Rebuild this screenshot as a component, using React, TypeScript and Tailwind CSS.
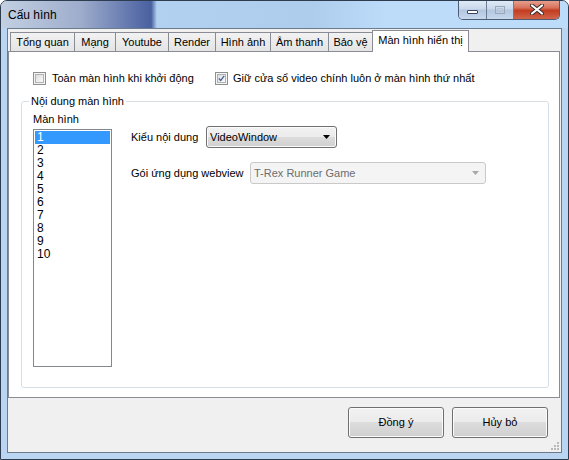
import React from "react";

const tabs = [
  { label: "Tổng quan", w: "w-[65px]" },
  { label: "Mạng", w: "w-[42px]" },
  { label: "Youtube", w: "w-[54px]" },
  { label: "Render", w: "w-[48px]" },
  { label: "Hình ảnh", w: "w-[56px]" },
  { label: "Âm thanh", w: "w-[59px]" },
  { label: "Bảo vệ", w: "w-[45px]" },
];

const screens = ["1", "2", "3", "4", "5", "6", "7", "8", "9", "10"];

const Checkbox: React.FC<{ checked?: boolean }> = ({ checked }) => (
  <div className="w-[13px] h-[13px] shrink-0 border border-[#8e8f8f] bg-[#f4f4f4] p-px">
    <div className="w-full h-full border border-[#aeb3b9] bg-gradient-to-br from-[#dcdcdc] to-[#fbfbfb] flex items-center justify-center">
      {checked && (
        <svg width="9" height="9" viewBox="0 0 9 9">
          <path d="M1 4.5 L3.5 7 L8 1" fill="none" stroke="#4a5f97" strokeWidth="1.6" />
        </svg>
      )}
    </div>
  </div>
);

const Arrow: React.FC<{ color: string }> = ({ color }) => (
  <svg width="7" height="4" viewBox="0 0 7 4">
    <path d="M0 0 H7 L3.5 4 Z" fill={color} />
  </svg>
);

const Button: React.FC<{ label: string }> = ({ label }) => (
  <button className="w-[96px] h-[31px] rounded-[3px] border border-[#707070] bg-[linear-gradient(#f2f2f2_0%,#ebebeb_50%,#dddddd_50%,#cfcfcf_100%)] shadow-[inset_0_0_0_1px_#fbfbfb] text-[11px] text-black">
    {label}
  </button>
);

const App: React.FC = () => {
  return (
    <div className="w-[569px] h-[460px] flex flex-col border border-[#2e3c50] rounded-t-[7px] bg-[#b9d5f2] font-['Liberation_Sans',Arial,sans-serif] text-[11px] text-black overflow-hidden">
      {/* title bar */}
      <div className="h-[27px] shrink-0 flex items-start justify-between bg-[linear-gradient(90deg,#c3d0e2_0%,#9eadcc_14%,#5369a6_25%,#4a61a0_26.5%,#b2d0ef_27.5%,#aecdec_55%,#bcdcfa_68%,#bddcf9_100%)]">
        <span className="ml-[7px] mt-[7px] text-[12px] leading-[15px] text-black">Cấu hình</span>
        <div className="mr-[8px] -mt-px flex h-[20px] border border-t-0 border-[#4f5d72] rounded-b-[5px] overflow-hidden">
          <div className="w-[28px] h-full flex items-center justify-center bg-[linear-gradient(#e3ecf7_0%,#cad9ec_45%,#b3c7e0_55%,#c7d8ee_100%)] border-r border-[#6d7d94]">
            <div className="w-[11px] h-[4px] mt-[4px] bg-white border border-[#3c4658] rounded-[1px]" />
          </div>
          <div className="w-[27px] h-full flex items-center justify-center bg-[linear-gradient(#e3ecf7_0%,#cad9ec_45%,#b3c7e0_55%,#c7d8ee_100%)] border-r border-[#6d7d94]">
            <div className="w-[10px] h-[8px] border border-[#9aa8bb] p-[1px]">
              <div className="w-full h-full border border-[#b8c4d3]" />
            </div>
          </div>
          <div className="w-[45px] h-full flex items-center justify-center bg-[linear-gradient(#e8a594_0%,#d8735c_40%,#c33d22_55%,#d1654a_100%)]">
            <svg width="14" height="11" viewBox="0 0 14 11">
              <path d="M2 1.5 L12 9.5 M12 1.5 L2 9.5" stroke="#3a2a2a" strokeWidth="4" strokeLinecap="round" />
              <path d="M2 1.5 L12 9.5 M12 1.5 L2 9.5" stroke="#ffffff" strokeWidth="2.2" strokeLinecap="round" />
            </svg>
          </div>
        </div>
      </div>

      {/* client area */}
      <div className="relative mx-[6px] h-[425px] shrink-0 border border-[#6c7a8d] bg-[#f0f0f0] flex flex-col">
        {/* tab strip */}
        <div className="flex items-end h-[21px] mt-px pl-[2px]">
          {tabs.map((t, i) => (
            <div
              key={t.label}
              className={`${t.w} ${i > 0 ? "-ml-px" : ""} h-[19px] border border-b-0 border-[#898c95] bg-[linear-gradient(#f2f2f2,#e4e4e4)] flex items-center justify-center leading-[13px] pt-px`}
            >
              {t.label}
            </div>
          ))}
          <div className="w-[97px] -ml-px h-[22px] -mb-px relative z-10 border border-b-0 border-[#898c95] bg-white flex items-start justify-center leading-[13px] pt-[3px]">
            Màn hình hiển thị
          </div>
        </div>

        {/* tab page */}
        <div className="w-[552px] h-[347px] border border-[#898c95] bg-white flex flex-col">
          <div className="flex items-center mt-[20px] ml-[24px] h-[13px]">
            <div className="w-[182px] flex items-center gap-[6px]">
              <Checkbox />
              <span className="leading-[13px]">Toàn màn hình khi khởi động</span>
            </div>
            <div className="flex items-center gap-[5px]">
              <Checkbox checked />
              <span className="leading-[13px]">Giữ cửa sổ video chính luôn ở màn hình thứ nhất</span>
            </div>
          </div>

          <fieldset className="ml-[12px] mt-[10px] w-[528px] h-[293px] border border-[#d5dfe5] rounded-[3px] pl-[11px]">
            <legend className="ml-[-4px] px-[2px] leading-[13px]">Nội dung màn hình</legend>
            <div className="flex">
              <div className="flex flex-col mt-[5px]">
                <span className="leading-[13px]">Màn hình</span>
                <div className="mt-[3px] w-[79px] h-[238px] border border-[#828790] p-px">
                  {screens.map((s, i) => (
                    <div
                      key={s}
                      className={`h-[13px] leading-[13px] pl-[2px] text-[12px] ${i === 0 ? "bg-[#3399ff] text-white" : ""}`}
                    >
                      {s}
                    </div>
                  ))}
                </div>
              </div>

              <div className="ml-[19px] mt-[18px] flex flex-col">
                <div className="flex items-center h-[22px]">
                  <span className="w-[75px] leading-[13px]">Kiểu nội dung</span>
                  <div className="w-[131px] h-[22px] rounded-[3px] border border-[#707070] bg-[linear-gradient(#f2f2f2_0%,#ebebeb_50%,#dddddd_50%,#cfcfcf_100%)] shadow-[inset_0_0_0_1px_#fbfbfb] flex items-center justify-between pl-[3px] pr-[6px]">
                    <span className="leading-[13px]">VideoWindow</span>
                    <Arrow color="#000000" />
                  </div>
                </div>
                <div className="flex items-center h-[22px] mt-[14px]">
                  <span className="w-[119px] leading-[13px]">Gói ứng dụng webview</span>
                  <div className="w-[236px] h-[22px] rounded-[3px] border border-[#c9c9c9] bg-[#f4f4f4] flex items-center justify-between pl-[3px] pr-[6px]">
                    <span className="leading-[13px] text-[#6d6d6d]">T-Rex Runner Game</span>
                    <Arrow color="#a8a8a8" />
                  </div>
                </div>
              </div>
            </div>
          </fieldset>
        </div>

        {/* buttons */}
        <div className="flex justify-end gap-[8px] pt-[9px] pr-[13px]">
          <Button label="Đồng ý" />
          <Button label="Hủy bỏ" />
        </div>

        <svg className="absolute right-[2px] bottom-[2px]" width="8" height="8" viewBox="0 0 8 8">
          {[
            [6, 0],
            [6, 3],
            [3, 3],
            [6, 6],
            [3, 6],
            [0, 6],
          ].map(([x, y]) => (
            <rect key={`${x}-${y}`} x={x} y={y} width="2" height="2" fill="#b8b8b8" />
          ))}
        </svg>
      </div>
    </div>
  );
};

export default App;
